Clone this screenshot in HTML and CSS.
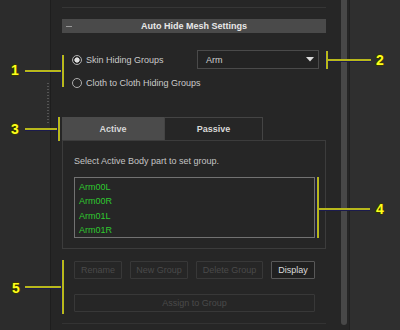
FILE: index.html
```html
<!DOCTYPE html>
<html>
<head>
<meta charset="utf-8">
<link rel="stylesheet" href="styles.css">
</head>
<body>
<div class="app">
  <div class="left"><div class="grip"></div></div>
  <div class="panel">
    <div class="topline"></div>
    <div class="header">
      <span class="minus"></span>
      <span class="title">Auto Hide Mesh Settings</span>
      <span></span>
    </div>
    <div class="modes">
      <div class="radio-row r1"><span class="radio checked"></span><span>Skin Hiding Groups</span></div>
      <div class="select">
        <span>Arm</span>
        <svg class="arrow" width="8" height="5" viewBox="0 0 8 5"><polygon points="0,0 8,0 4,4.5" fill="#dcdcdc"/></svg>
      </div>
      <div class="radio-row r2"><span class="radio"></span><span>Cloth to Cloth Hiding Groups</span></div>
    </div>
    <div class="tabs">
      <div class="tab active">Active</div>
      <div class="tab">Passive</div>
    </div>
    <div class="tabbox">
      <div class="hint">Select Active Body part to set group.</div>
      <div class="list">
        <div class="item">Arm00L</div>
        <div class="item">Arm00R</div>
        <div class="item">Arm01L</div>
        <div class="item">Arm01R</div>
      </div>
    </div>
    <div class="btnrow">
      <div class="btn dis w-rename">Rename</div>
      <div class="btn dis w-new">New Group</div>
      <div class="btn dis w-del">Delete Group</div>
      <div class="btn on w-disp">Display</div>
    </div>
    <div class="btn dis assign">Assign to Group</div>
    <div class="bottomline"></div>
  </div>
  <div class="scroll"><div class="thumb"></div></div>
  <div class="right"></div>
</div>

<div class="ann">
  <div class="num n1">1</div>
  <div class="hl h1"></div>
  <div class="vl v1"></div>

  <div class="num n2">2</div>
  <div class="hl h2"></div>
  <div class="vl v2"></div>

  <div class="num n3">3</div>
  <div class="hl h3"></div>
  <div class="vl v3"></div>

  <div class="num n4">4</div>
  <div class="hl h4"></div>
  <div class="vl v4"></div>

  <div class="num n5">5</div>
  <div class="hl h5"></div>
  <div class="vl v5"></div>
</div>
</body>
</html>
```

FILE: styles.css
```css
* { box-sizing: border-box; }
html, body {
  margin: 0;
  padding: 0;
  width: 400px;
  height: 330px;
  overflow: hidden;
  background: #2e2e2e;
  font-family: "Liberation Sans", Arial, sans-serif;
  font-size: 9px;
  color: #c8c8c8;
}
.app {
  display: flex;
  height: 330px;
  position: relative;
}
.left {
  width: 51px;
  background: #2c2c2c;
  border-right: 1px solid #1e1e1e;
  display: flex;
  flex-direction: column;
  align-items: flex-end;
}
.grip {
  margin-top: 83px;
  margin-right: 1px;
  width: 2px;
  height: 42px;
  background: repeating-linear-gradient(to bottom, #555 0 1px, transparent 1px 3px);
}
.panel {
  width: 289px;
  background: #262626;
  padding: 7px 14px 0 11px;
  display: flex;
  flex-direction: column;
}
.topline {
  height: 1px;
  background: #363636;
}
.header {
  margin-top: 11px;
  height: 14px;
  background: #4a4a4a;
  display: grid;
  grid-template-columns: 1fr auto 1fr;
  align-items: center;
}
.minus {
  width: 6px;
  height: 1px;
  margin-left: 4px;
  background: #9a9a9a;
}
.title {
  font-weight: bold;
  color: #e8e8e8;
  font-size: 9px;
}
.modes {
  margin-top: 17px;
  display: grid;
  grid-template-columns: 1fr 122px;
  grid-template-rows: 19px 19px;
  row-gap: 4px;
  column-gap: 7px;
  padding: 0 7px 0 10px;
}
.radio-row {
  height: 19px;
  display: flex;
  align-items: center;
  gap: 4px;
  color: #cacaca;
  white-space: nowrap;
}
.r2 { grid-column: 1 / 3; }
.radio {
  width: 10px;
  height: 10px;
  border-radius: 50%;
  border: 1px solid #aeaeae;
}
.radio.checked {
  background: radial-gradient(circle, #dedede 0 2.3px, transparent 2.9px);
}
.select {
  height: 19px;
  border: 1px solid #4a4a4a;
  background: #232323;
  display: flex;
  align-items: center;
  justify-content: space-between;
  padding: 0 4px 0 8px;
  color: #d0d0d0;
}
.tabs {
  margin-top: 25px;
  display: flex;
  height: 23px;
}
.tab {
  display: flex;
  align-items: center;
  justify-content: center;
  font-weight: bold;
  color: #d8d8d8;
  width: 99px;
  border: 1px solid #444;
  border-bottom: none;
}
.tab.active {
  width: 102px;
  background: #4b4b4b;
  border-color: #4b4b4b;
}
.tabbox {
  height: 109px;
  border: 1px solid #3c3c3c;
  padding: 14px 10px 10px 11px;
  display: flex;
  flex-direction: column;
}
.hint {
  line-height: 12px;
  color: #c4c4c4;
}
.list {
  margin-top: 10px;
  height: 61px;
  border: 1px solid #727272;
  padding: 2px 4px;
}
.item {
  line-height: 14.4px;
  color: #2fc92f;
}
.btnrow {
  margin-top: 12px;
  padding-left: 12px;
  display: flex;
  gap: 8px;
}
.btn {
  height: 18px;
  display: flex;
  align-items: center;
  justify-content: center;
  border-radius: 1px;
}
.btn.dis {
  border: 1px solid #383838;
  color: #4a4a4a;
}
.btn.on {
  border: 1px solid #585858;
  background: #202020;
  color: #dcdcdc;
}
.w-rename { width: 48px; }
.w-new { width: 58px; }
.w-del { width: 67px; }
.w-disp { width: 44px; }
.assign {
  margin-top: 15px;
  margin-left: 12px;
  width: 241px;
}
.bottomline {
  margin-top: 11px;
  height: 1px;
  background: #333;
}
.scroll {
  width: 9px;
  background: #262626;
  padding-left: 1px;
}
.thumb {
  width: 6px;
  height: 325px;
  background: #484848;
  border-radius: 0 0 3px 3px;
}
.right {
  flex: 1;
  background: #2f2f2f;
  border-left: 1px solid #202020;
}

/* annotations (overlay callouts) */
.ann { position: absolute; left: 0; top: 0; width: 400px; height: 330px; pointer-events: none; }
.num {
  position: absolute;
  font-family: "Liberation Sans", Arial, sans-serif;
  font-weight: bold;
  font-size: 14px;
  line-height: 14px;
  color: #ffff1a;
  text-shadow: 1px 0 0 #3a3a00, -1px 0 0 #3a3a00, 0 1px 0 #3a3a00, 0 -1px 0 #3a3a00;
}
.hl {
  position: absolute;
  height: 2px;
  background: #b8b81c;
  box-shadow: 0 1px 0 #1b1b4e;
}
.vl {
  position: absolute;
  width: 2px;
  background: #b8b81c;
  box-shadow: -1px 0 0 #1b1b4e;
}
.n1 { left: 11px; top: 63px; }
.h1 { left: 25px; top: 70px; width: 38px; }
.v1 { left: 62px; top: 55px; height: 32px; }

.n2 { left: 376px; top: 53px; }
.h2 { left: 327px; top: 59px; width: 44px; }
.v2 { left: 326px; top: 51px; height: 18px; }

.n3 { left: 11px; top: 122px; }
.h3 { left: 25px; top: 128px; width: 33px; }
.v3 { left: 58px; top: 117px; height: 24px; }

.n4 { left: 376px; top: 202px; }
.h4 { left: 318px; top: 208px; width: 52px; }
.v4 { left: 317px; top: 177px; height: 61px; }

.n5 { left: 12px; top: 281px; }
.h5 { left: 25px; top: 286px; width: 38px; }
.v5 { left: 62px; top: 260px; height: 54px; }
```
